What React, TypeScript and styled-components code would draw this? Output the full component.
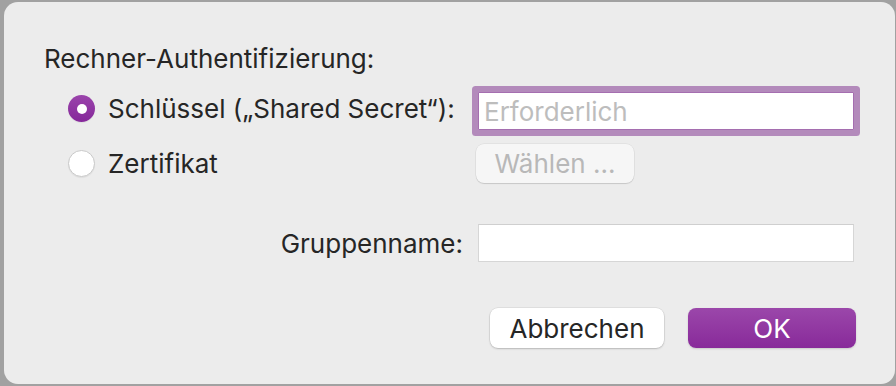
import React from 'react';
import styled, { createGlobalStyle, css } from 'styled-components';

const GlobalStyle = createGlobalStyle`
  html, body {
    margin: 0;
    padding: 0;
    background: #a1a1a1;
  }
  body {
    font-family: Inter, "Liberation Sans", Arial, sans-serif;
    color: #262626;
  }
`;

const Screen = styled.div`
  width: 896px;
  height: 386px;
  padding: 2px 1px 2px 4px;
  box-sizing: border-box;
`;

const Sheet = styled.div`
  height: 100%;
  box-sizing: border-box;
  background: #ececec;
  border-radius: 14px;
  padding: 42px 40px 0 40px;
  display: flex;
  flex-direction: column;
`;

const Title = styled.div`
  font-size: 26px;
  line-height: 30px;
  height: 30px;
`;

const Form = styled.div`
  display: grid;
  grid-template-columns: 434px 376px;
  margin-top: 18px;
`;

const OptionCell = styled.label`
  display: flex;
  align-items: center;
  gap: 13px;
  padding-left: 24px;
  font-size: 26px;
  white-space: nowrap;
`;

const FirstOption = styled(OptionCell)`
  padding-bottom: 5px;
`;

interface CheckedProps {
  $checked?: boolean;
}

const Radio = styled.span<CheckedProps>`
  width: 27px;
  height: 27px;
  border-radius: 50%;
  box-sizing: border-box;
  display: flex;
  align-items: center;
  justify-content: center;
  flex-shrink: 0;
  background: #ffffff;
  border: 1px solid #c9c9c9;
  box-shadow: 0 1px 1px rgba(0, 0, 0, 0.06);
  ${(p) =>
    p.$checked &&
    css`
      border: none;
      background: linear-gradient(#9a44ab, #85289a);
      &::after {
        content: '';
        width: 10px;
        height: 10px;
        border-radius: 50%;
        background: #ffffff;
      }
    `}
`;

const Field = styled.div<{ $focused?: boolean }>`
  height: 38px;
  box-sizing: border-box;
  background: #ffffff;
  border: 1px solid #d6d6d6;
  border-top-color: #cfcfcf;
  font-size: 26px;
  color: #bdbdbd;
  padding: 0 5px;
  display: flex;
  align-items: center;
  ${(p) =>
    p.$focused &&
    css`
      border: 1px solid #a56eb0;
      box-shadow: 0 0 0 6px #b38abb;
      border-radius: 1px;
    `}
`;

const SecondRow = styled.div`
  display: contents;
`;

const ChooseButton = styled.div`
  margin-top: 14px;
  margin-left: -2px;
  width: 158px;
  height: 39px;
  box-sizing: border-box;
  border-radius: 8px;
  background: #f6f6f6;
  box-shadow: 0 0 0 0.5px rgba(0, 0, 0, 0.08), 0 1px 1px rgba(0, 0, 0, 0.12);
  color: #b8b8b8;
  font-size: 26px;
  display: flex;
  align-items: center;
  justify-content: center;
`;

const SecondOption = styled(OptionCell)`
  margin-top: 14px;
`;

const FieldLabel = styled.div`
  margin-top: 41px;
  font-size: 26px;
  display: flex;
  align-items: center;
  justify-content: flex-end;
  padding-right: 15px;
`;

const GroupField = styled(Field)`
  margin-top: 41px;
`;

const Actions = styled.div`
  display: flex;
  justify-content: flex-end;
  gap: 24px;
  margin-top: 46px;
  width: 812px;
`;

const Button = styled.div<{ $primary?: boolean }>`
  height: 40px;
  box-sizing: border-box;
  border-radius: 8px;
  font-size: 26px;
  display: flex;
  align-items: center;
  justify-content: center;
  background: #ffffff;
  color: #262626;
  box-shadow: 0 0 0 0.5px rgba(0, 0, 0, 0.1), 0 1px 2px rgba(0, 0, 0, 0.18);
  ${(p) =>
    p.$primary &&
    css`
      background: linear-gradient(#9b47aa, #882a9a);
      color: #ffffff;
      box-shadow: 0 1px 2px rgba(0, 0, 0, 0.15);
    `}
`;

export default function App() {
  return (
    <>
      <GlobalStyle />
      <Screen>
        <Sheet>
          <Title>Rechner-Authentifizierung:</Title>
          <Form>
            <FirstOption>
              <Radio $checked />
              Schlüssel („Shared Secret“):
            </FirstOption>
            <Field $focused>Erforderlich</Field>
            <SecondRow>
              <SecondOption>
                <Radio />
                Zertifikat
              </SecondOption>
              <div>
                <ChooseButton>Wählen ...</ChooseButton>
              </div>
            </SecondRow>
            <FieldLabel>Gruppenname:</FieldLabel>
            <GroupField />
          </Form>
          <Actions>
            <Button style={{ width: 174 }}>Abbrechen</Button>
            <Button $primary style={{ width: 168 }}>
              OK
            </Button>
          </Actions>
        </Sheet>
      </Screen>
    </>
  );
}
